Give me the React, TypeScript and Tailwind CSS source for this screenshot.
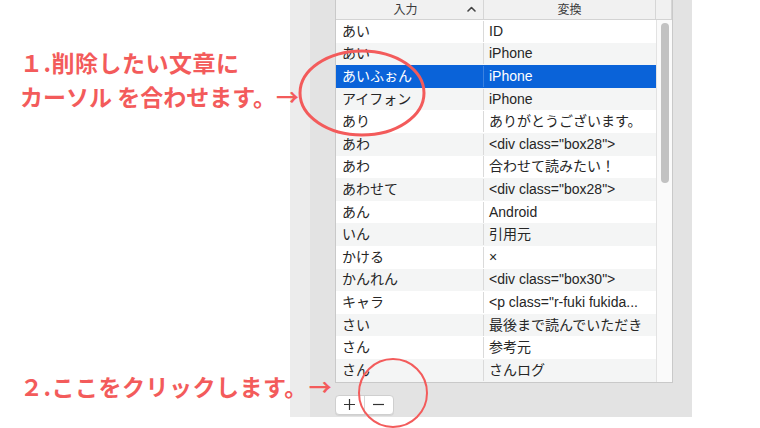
const rows: [string, string][] = [
  ["あい", "ID"],
  ["あい", "iPhone"],
  ["あいふぉん", "iPhone"],
  ["アイフォン", "iPhone"],
  ["あり", "ありがとうございます。"],
  ["あわ", '<div class="box28">'],
  ["あわ", "合わせて読みたい！"],
  ["あわせて", '<div class="box28">'],
  ["あん", "Android"],
  ["いん", "引用元"],
  ["かける", "×"],
  ["かんれん", '<div class="box30">'],
  ["キャラ", '<p class="r-fuki fukida...'],
  ["さい", "最後まで読んでいただき"],
  ["さん", "参考元"],
  ["さん", "さんログ"],
];

const SELECTED = 2;

function Row({ a, b, i }: { a: string; b: string; i: number }) {
  const selected = i === SELECTED;
  const bg = selected ? "bg-[#0a63d9] text-white" : i % 2 === 0 ? "bg-white text-[#262626]" : "bg-[#f4f5f5] text-[#262626]";
  return (
    <div className={`flex h-[22.6px] items-center ${bg}`}>
      <div className={`w-[148px] pl-[6px] border-r ${selected ? "border-[#3b82e0]" : "border-[#dadada]"}`}>{a}</div>
      <div className="w-[172px] pl-[5px] whitespace-nowrap overflow-hidden">{b}</div>
    </div>
  );
}

export default function App() {
  return (
    <div
      className="relative w-[760px] h-[428px] bg-white flex overflow-hidden"
      style={{ fontFamily: '"Liberation Sans", "Noto Sans CJK JP", sans-serif' }}
    >
      {/* annotation texts */}
      <div
        className="relative z-10 w-[290px] shrink-0 flex flex-col pl-5 pt-[45px] pb-[25px] text-[23px] tracking-[0.5px] font-bold leading-[34px] text-[#f35b5b] whitespace-nowrap"
        style={{ fontFamily: '"Noto Sans CJK JP", sans-serif' }}
      >
        <p>１.削除したい文章に</p>
        <p className="tracking-normal">
          カーソル を合わせます。<span>→</span>
        </p>
        <p className="mt-auto">
          ２.ここをクリックします。<span className="ml-[1px]">→</span>
        </p>
      </div>

      {/* preference panel */}
      <div className="w-[402px] h-[417px] shrink-0 bg-[#e3e3e3] flex">
        <div className="w-5 bg-[#ececec]" />
        <div className="pl-[25px] flex flex-col">
          <div className="w-[338px] border-x border-b border-[#c9c9c9] bg-white text-[14px]">
            {/* header */}
            <div className="flex h-[20px] items-center bg-[#f1f1f1] border-b border-[#d3d3d3] text-[12px] text-[#3a3a3a]">
              <div className="w-[148px] h-full flex items-center border-r border-[#d6d6d6] relative">
                <span className="flex-1 text-center pr-2">入力</span>
                <svg className="absolute right-[7px] top-[6px]" width="9" height="6" viewBox="0 0 9 6" fill="none">
                  <path d="M1 5L4.5 1.5L8 5" stroke="#444" strokeWidth="1.6" strokeLinecap="round" strokeLinejoin="round" />
                </svg>
              </div>
              <div className="w-[172px] h-full flex items-center justify-center border-r border-[#d6d6d6]">変換</div>
              <div className="w-[16px] h-full border-r border-[#d6d6d6]" />
            </div>
            <div className="flex">
              <div className="flex flex-col">
                {rows.map(([a, b], i) => (
                  <Row key={i} a={a} b={b} i={i} />
                ))}
              </div>
              <div className="flex-1 border-l border-[#e2e2e2] bg-[#fafafa] pt-[3px] flex justify-center">
                <div className="w-[8px] h-[160px] rounded-full bg-[#c2c2c2]" />
              </div>
            </div>
          </div>
          <div className="mt-[12px] flex w-[59px] h-[20px] rounded-[4px] bg-white border border-[#cfcfcf] shadow-[0_1px_0_rgba(0,0,0,0.06)]">
            <div className="w-1/2 flex items-center justify-center border-r border-[#d6d6d6]">
              <svg width="13" height="13" viewBox="0 0 13 13">
                <path d="M6.5 1V12M1 6.5H12" stroke="#333" strokeWidth="1.2" />
              </svg>
            </div>
            <div className="w-1/2 flex items-center justify-center">
              <svg width="13" height="13" viewBox="0 0 13 13">
                <path d="M1 6.5H12" stroke="#333" strokeWidth="1.2" />
              </svg>
            </div>
          </div>
        </div>
      </div>

      {/* red circles */}
      <svg className="absolute left-[298px] top-[49px]" width="130" height="90" viewBox="0 0 130 90" fill="none">
        <ellipse cx="64" cy="44" rx="62" ry="42" stroke="#f35b5b" strokeWidth="3" />
      </svg>
      <svg className="absolute left-[357px] top-[357px]" width="72" height="72" viewBox="0 0 72 72" fill="none">
        <circle cx="36" cy="36" r="34" stroke="#f35b5b" strokeWidth="2" />
      </svg>
    </div>
  );
}
